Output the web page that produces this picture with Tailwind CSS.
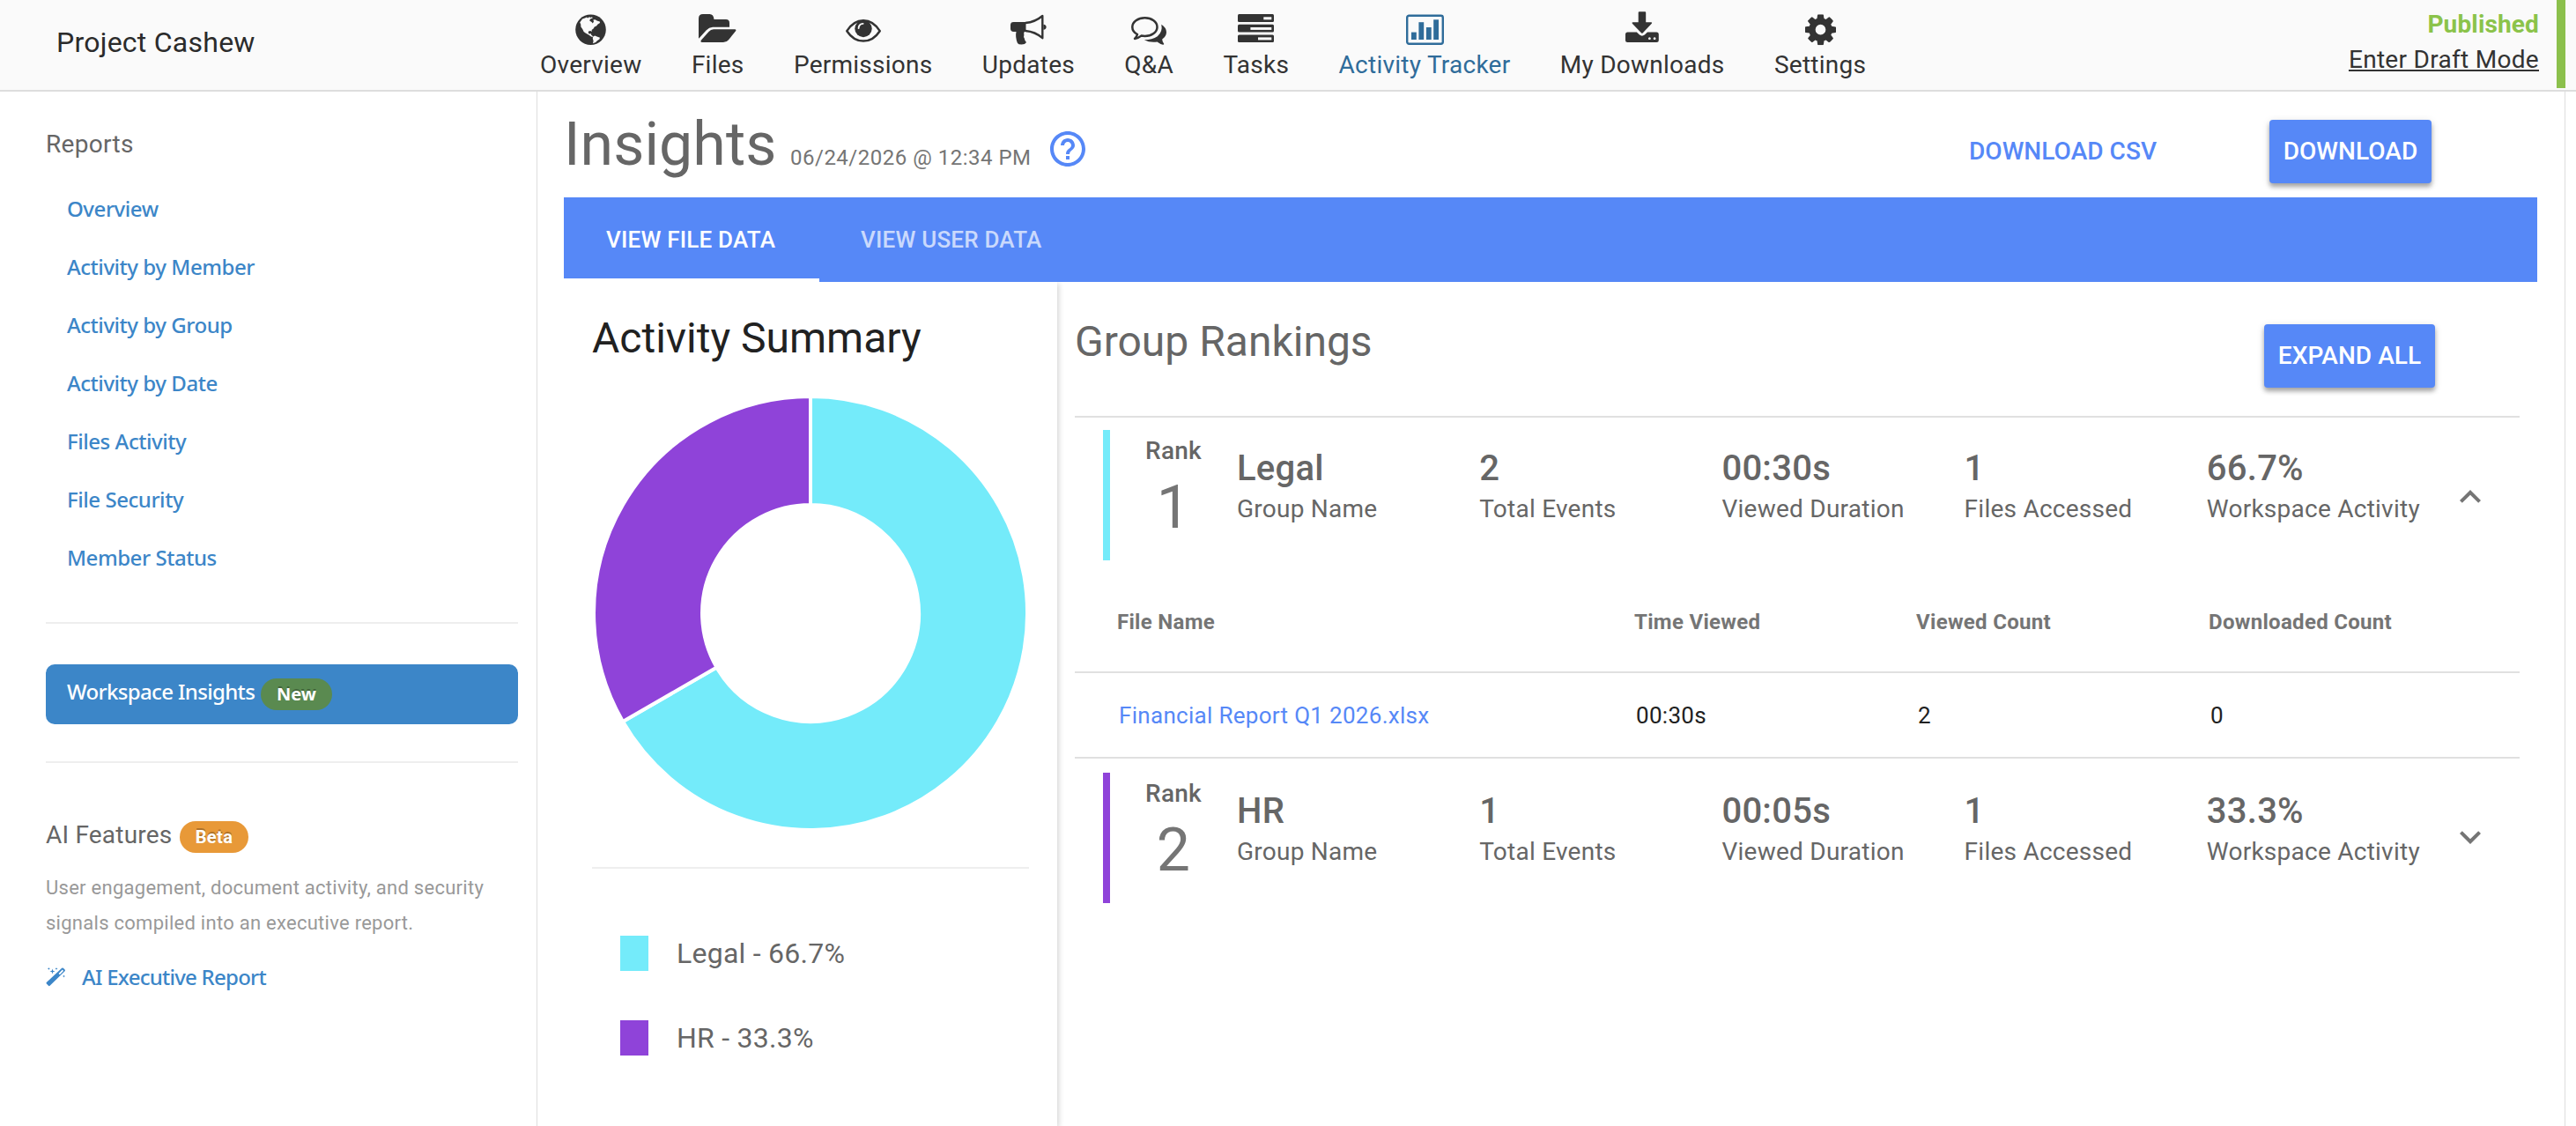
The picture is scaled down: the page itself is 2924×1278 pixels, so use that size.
<!DOCTYPE html>
<html lang="en">
<head>
  <meta charset="UTF-8"/>
  <meta name="viewport" content="width=device-width,initial-scale=1"/>
  <title>Project Cashew – Workspace Insights</title>
  <script src="https://cdn.jsdelivr.net/npm/@tailwindcss/browser@4"></script>
</head>
<body class="bg-white font-['Roboto',sans-serif] tracking-[0.25px] text-[#666] h-screen overflow-hidden flex flex-col">

  <!-- ─── TOP BAR ────────────────────────────────────────────────────────────── -->
  <header class="h-[104px] shrink-0 bg-[#fafafa] border-b-2 border-[#ddd] flex text-[28px] leading-[33px] text-[#333]">
    <div class="w-[613px] shrink-0 pl-16 pt-7 text-[32px] leading-10 text-[#2b2b2b]">Project Cashew</div>

    <nav class="flex gap-[56.4px] pt-3 whitespace-nowrap">
      <a class="flex flex-col items-center gap-[5px]">
        <svg class="h-10 w-[35px]" viewBox="0 0 35 40">
          <circle cx="17.5" cy="21.7" r="17.3" fill="#333"/>
          <g fill="#fafafa">
            <path d="M5.2 13.500L8 9.600L11 8.400L13 7.600L14 8.400L16 7.200L17.500 8L19 7.200L19.800 8.600L17 9.600L16.200 11.600L18.600 13L19.800 14.600L21 12.600L20.400 10.600L22.600 10.200L24.600 11.600L27.800 12.600L28 14L25.600 15.400L24 17.400L21.800 18.600L20.600 20.600L18.600 22L18.800 24L17.400 23L15 23.600L14.800 25.800L16.400 26.600L17.800 26L18 27.600L19.400 28.600L20 30.200L18 29.600L15.200 27.600L12 25.800L9.600 24L8.200 21L6.400 18.400L6.200 15.400Z"/>
            <path d="M20.200 29.600L22.200 28.400L24.600 29.400L28 30.800L27.400 32.600L24.800 34.200L23.200 36L20 37.200L20.600 34.400L19.800 31.800Z"/>
          </g>
        </svg>
        Overview
      </a>
      <a class="flex flex-col items-center gap-[5px]">
        <svg class="h-10 w-[43px]" viewBox="0 0 43 40" fill="#333">
          <g transform="translate(0 4)">
            <path d="M0 5Q0 0 5 0H12.500Q17 0 17.500 6H31Q35 6 35 10V14.700H16Q11.800 14.900 8.800 18.200L.4 27.500H0Z"/>
            <path d="M17 17.300H41Q43.200 17.500 42 19.200L34 29.200Q31.700 32 28 32H4Q1.500 31.800 3 29.600L11.500 19.900Q13.800 17.300 17 17.300Z"/>
          </g>
        </svg>
        Files
      </a>
      <a class="flex flex-col items-center gap-[5px]">
        <svg class="h-10 w-10" viewBox="0 0 40 40">
          <g transform="translate(0 10)">
            <path d="M1.300 13.200Q8.800 1.300 20 1.300T38.700 13.200Q31.200 24.600 20 24.600T1.300 13.200Z" fill="none" stroke="#333" stroke-width="2.500" stroke-linejoin="round"/>
            <circle cx="20" cy="10.500" r="9.700" fill="#333"/>
            <path d="M14.600 10Q14.800 5.200 19.600 4.900" fill="none" stroke="#fafafa" stroke-width="1.900" stroke-linecap="round"/>
          </g>
        </svg>
        Permissions
      </a>
      <a class="flex flex-col items-center gap-[5px]">
        <svg class="h-10 w-[41px]" viewBox="0 0 41 40" fill="#333">
          <g transform="translate(0 4.600)">
            <path d="M3.500 8.300H17.500V19.400H15.800Q14.600 21.500 15.400 23Q14.600 25 15.800 27Q16 29.500 18 31.500Q16.500 34 12.500 34Q9 34 8 32.500Q5.200 25.500 6.500 19.400H3.500Q0 19.400 0 16V11.700Q0 8.300 3.500 8.300Z"/>
            <path d="M17 9.400Q28 8.500 36.300 1.400V26.600Q28 19.300 17 18.400" fill="none" stroke="#333" stroke-width="2.400" stroke-linejoin="round"/>
            <path d="M37.400 11.200Q40.600 11.600 40.600 14.200T37.400 17.200Z"/>
          </g>
        </svg>
        Updates
      </a>
      <a class="flex flex-col items-center gap-[5px]">
        <svg class="h-10 w-10" viewBox="0 0 40 40" fill="#333">
          <g transform="translate(0 7)">
            <path d="M15.500 1.300C23.300 1.300 29.500 5.900 29.500 11.700S23.300 22 15.500 22Q13.500 22 11.400 21.600Q8 24.400 4 24.900Q6.300 22.900 7 20Q1.300 17 1.300 11.700C1.300 5.900 7.700 1.300 15.500 1.300Z" fill="none" stroke="#333" stroke-width="2.500" stroke-linejoin="round"/>
            <path d="M34.300 8.700Q40 12.400 40 17.500Q40 22 35.200 25.500Q35.200 28.500 37.300 31Q37 31.800 36 31.700Q32.800 31.200 29.500 28.600Q21 29.700 14.800 26.300Q24 26.300 29.800 22.200Q36 17 34.300 8.700Z"/>
          </g>
        </svg>
        Q&amp;A
      </a>
      <a class="flex flex-col items-center gap-[5px]">
        <svg class="h-10 w-[41px]" viewBox="0 0 41 40">
          <g fill="#333">
            <rect y="4" width="41" height="9" rx="1.500"/>
            <rect y="15.800" width="41" height="8.800" rx="1.500"/>
            <rect y="27.500" width="41" height="8.600" rx="1.500"/>
          </g>
          <g fill="#fafafa">
            <rect x="29.300" y="7.300" width="9" height="3"/>
            <rect x="14.400" y="19" width="23.900" height="2.900"/>
            <rect x="23" y="30.400" width="15.300" height="3"/>
          </g>
        </svg>
        Tasks
      </a>
      <a class="flex flex-col items-center gap-[5px] text-[#2f6c9a]">
        <svg class="h-10 w-[43px]" viewBox="0 0 43 40" fill="#2f6c9a">
          <rect x="1.200" y="5.800" width="40.600" height="32" rx="2.200" fill="none" stroke="#2f6c9a" stroke-width="2.400"/>
          <rect x="6" y="24.600" width="5.800" height="8.400"/>
          <rect x="14.400" y="13.200" width="5.800" height="19.800"/>
          <rect x="22.900" y="19" width="5.800" height="14"/>
          <rect x="31.200" y="10.300" width="5.800" height="22.700"/>
        </svg>
        Activity Tracker
      </a>
      <a class="flex flex-col items-center gap-[5px]">
        <svg class="h-10 w-[38px]" viewBox="0 0 38 40" fill="#333">
          <g transform="translate(0 1.300)">
            <path d="M15.700 0H22.200Q23.200 0 23.200 1V12H29.300Q30.800 12.200 29.800 13.400L19.600 24.200Q18.900 24.800 18.200 24.200L7.800 13.400Q6.900 12.200 8.400 12H14.700V1Q14.700 0 15.700 0Z"/>
            <path fill-rule="evenodd" d="M2.500 23.200H12.800L16 26.300Q18.900 28.600 21.800 26.300L25 23.200H35.300Q37.800 23.200 37.800 25.700V32.200Q37.800 34.700 35.300 34.700H2.500Q0 34.700 0 32.200V25.700Q0 23.200 2.500 23.200ZM27.400 29a1.400 1.400 0 1 0 .01 0ZM33.100 29a1.400 1.400 0 1 0 .01 0Z"/>
          </g>
        </svg>
        My Downloads
      </a>
      <a class="flex flex-col items-center gap-[5px]">
        <svg class="h-10 w-[35px]" viewBox="0 0 35 40" fill="#333">
          <svg y="4.200" width="35" height="35" viewBox="128 128 1536 1536">
            <path d="M1152 896q0-106-75-181t-181-75-181 75-75 181 75 181 181 75 181-75 75-181zm512-109v222q0 12-8 23t-20 13l-185 28q-19 54-39 91 35 50 107 138 10 12 10 25t-9 23q-27 37-99 108t-94 71q-12 0-26-9l-138-108q-44 23-91 38-16 136-29 186-7 28-36 28h-222q-14 0-24.500-8.500t-11.500-21.500l-28-184q-49-16-90-37l-141 107q-10 9-25 9-14 0-25-11-126-114-165-168-7-10-7-23 0-12 8-23 15-21 51-66.500t54-70.500q-27-50-41-99l-183-27q-13-2-21-12.500t-8-23.500v-222q0-12 8-23t19-13l186-28q14-46 39-92-40-57-107-138-10-12-10-24 0-10 9-23 26-36 98.500-107.500t94.500-71.500q13 0 26 10l138 107q44-23 91-38 16-136 29-186 7-28 36-28h222q14 0 24.500 8.500t11.500 21.500l28 184q49 16 90 37l142-107q9-9 24-9 13 0 25 10 129 119 165 170 7 8 7 22 0 12-8 23-15 21-51 66.500t-54 70.500q26 50 41 98l183 28q13 2 21 12.500t8 23.500z"/>
          </svg>
        </svg>
        Settings
      </a>
    </nav>

    <div class="ml-auto pt-[11px] pr-5 text-right tracking-[0.3px]">
      <div class="font-bold tracking-[0.15px] text-[#8bc34a]">Published</div>
      <a class="mt-[7px] block underline decoration-2 underline-offset-[2px]">Enter Draft Mode</a>
    </div>
    <div class="w-[10px] h-[100px] mr-3 bg-[#8bc04c]"></div>
  </header>

  <div class="flex flex-1 min-h-0">

    <!-- ─── SIDEBAR ──────────────────────────────────────────────────────────── -->
    <aside class="w-[610px] shrink-0 border-r border-[#ddd] pl-[52px] pr-[21px] pt-10">
      <h2 class="text-[28px] leading-10 tracking-[0.3px]">Reports</h2>
      <ul class="mt-5 pl-6 font-['Noto_Sans',sans-serif] font-medium text-[24px] leading-[66px] tracking-[-0.45px] text-[#3c86c8]">
        <li>Overview</li>
        <li>Activity by Member</li>
        <li>Activity by Group</li>
        <li>Activity by Date</li>
        <li>Files Activity</li>
        <li>File Security</li>
        <li>Member Status</li>
      </ul>

      <hr class="mt-10 border-t-2 border-[#eee]"/>
      <a class="mt-[46px] h-[68px] rounded-[10px] bg-[#3c86c8] pl-6 flex text-white font-['Noto_Sans',sans-serif]">
        <span class="w-[220px] text-[24px] leading-[62px] font-medium tracking-[-0.65px]">Workspace Insights</span>
        <span class="mt-4 w-[81px] h-9 rounded-full bg-[#5a8a50] text-center text-[20px] leading-9 font-bold tracking-normal [text-shadow:0_-2px_0_rgba(0,0,0,0.25)]">New</span>
      </a>
      <hr class="mt-[42px] border-t-2 border-[#eee]"/>

      <div class="mt-[62px] flex">
        <h2 class="w-[152px] text-[28px] leading-10 tracking-[0.2px]">AI Features</h2>
        <span class="mt-1 w-[78px] h-9 rounded-full bg-[#e89938] text-center text-[20px] leading-9 font-bold tracking-[0.4px] text-white [text-shadow:0_-2px_0_rgba(0,0,0,0.25)]">Beta</span>
      </div>
      <p class="mt-5 text-[22px] leading-10 tracking-[0.27px] text-[#999]">User engagement, document activity, and security<br/>signals compiled into an executive report.</p>
      <a class="mt-[21px] flex text-[#3c86c8]">
        <svg class="mt-[9px] w-[41px] h-[22px]" viewBox="0 0 41 22" fill="#3c86c8">
          <path fill-rule="evenodd" d="M18.200 .8Q19 .1 19.800 .8L21.600 2.600Q22.300 3.400 21.600 4.200L4.600 20.800Q3.800 21.500 3 20.800L.8 18.600Q.1 17.800 .8 17ZM18.900 2.600L14.600 6.900L15.900 8.200L20 4Z"/>
          <path d="M7.500 1.500L8.200 3.800L10.500 4.500L8.200 5.200L7.500 7.500L6.800 5.200L4.500 4.500L6.800 3.800ZM3.400 0L3.800 1.100L4.900 1.500L3.800 1.900L3.400 3L3 1.900L1.900 1.500L3 1.100ZM12 0L12.400 1.100L13.500 1.500L12.400 1.900L12 3L11.600 1.900L10.500 1.500L11.600 1.100ZM20.500 8.500L20.900 9.600L22 10L20.900 10.400L20.500 11.500L20.100 10.400L19 10L20.100 9.600Z"/>
        </svg>
        <span class="font-['Noto_Sans',sans-serif] font-medium text-[24px] leading-10 tracking-[-0.75px]">AI Executive Report</span>
      </a>
    </aside>

    <!-- ─── INSIGHTS ─────────────────────────────────────────────────────────── -->
    <main class="w-[2302px] border-r border-[#ddd] pl-[30px] flex flex-col">
      <div class="h-[120px] shrink-0 flex items-start">
        <h1 class="w-[257px] mt-5 text-[68px] leading-[80px] tracking-[0.1px]">Insights</h1>
        <span class="w-[291px] mt-[59px] text-[24px] leading-8 tracking-[0.5px] text-[#757575]">06/24/2026 @ 12:34 PM</span>
        <svg class="size-12 mt-[41px]" viewBox="0 0 24 24" fill="#5688f7">
          <path d="M11 18h2v-2h-2v2zm1-16C6.480 2 2 6.480 2 12s4.480 10 10 10 10-4.480 10-10S17.520 2 12 2zm0 18c-4.410 0-8-3.590-8-8s3.590-8 8-8 8 3.590 8 8-3.590 8-8 8zm0-14c-2.210 0-4 1.790-4 4h2c0-1.100.9-2 2-2s2 .9 2 2c0 2-3 1.750-3 5h2c0-2.250 3-2.500 3-5 0-2.210-1.790-4-4-4z"/>
        </svg>
        <div class="ml-auto mt-8 mr-[151px] flex font-medium text-[28px] leading-[72px] tracking-[0.05px]">
          <button class="w-[341px] text-left text-[#5688f7]">DOWNLOAD CSV</button>
          <button class="w-[184px] h-[72px] rounded-[4px] bg-[#5688f7] text-white shadow-[0_4px_5px_rgba(0,0,0,0.3),0_2px_10px_rgba(0,0,0,0.12)]">DOWNLOAD</button>
        </div>
      </div>

      <div class="w-[2240px] h-24 shrink-0 bg-[#5688f7] flex font-medium text-[26px] leading-[96px] tracking-[0.2px] text-white">
        <div class="w-[290px] h-24 pl-12 border-b-4 border-white">VIEW FILE DATA</div>
        <div class="pl-[47px] text-white/70">VIEW USER DATA</div>
      </div>

      <div class="flex flex-1 min-h-0 overflow-hidden">

        <!-- Activity summary -->
        <section class="w-[560px] shrink-0 px-8 shadow-[2px_2px_6px_rgba(0,0,0,0.16)]">
          <h2 class="pt-[35px] text-[48px] leading-[57px] tracking-normal text-[#212121]">Activity Summary</h2>
          <svg class="mt-9 w-[496px] h-[496px]" viewBox="-248 -248 496 496" stroke="#fff" stroke-width="4">
            <path fill="#74ebfa" d="M0 -246A246 246 0 1 1 -213 123L-106.500 61.500A123 123 0 1 0 0 -123Z"/>
            <path fill="#8f43d9" d="M-213 123A246 246 0 0 1 0 -246V-123A123 123 0 0 0 -106.500 61.500Z"/>
          </svg>
          <hr class="mt-10 border-t-2 border-[#eee]"/>
          <ul class="mt-[76px] pl-8 flex flex-col gap-14 text-[32px] leading-10">
            <li class="flex gap-8"><span class="w-8 h-10 bg-[#74ebfa]"></span>Legal - 66.7%</li>
            <li class="flex gap-8"><span class="w-8 h-10 bg-[#8f43d9]"></span>HR - 33.3%</li>
          </ul>
        </section>

        <!-- Group rankings -->
        <section class="flex-1 pl-5 pr-[51px]">
          <div class="h-[154px] border-b-2 border-[#e0e0e0] flex justify-between">
            <h2 class="pt-[39px] text-[48px] leading-[57px] tracking-normal">Group Rankings</h2>
            <button class="w-[194px] h-[72px] mt-12 mr-24 rounded-[4px] bg-[#5688f7] text-white font-medium text-[28px] leading-[72px] tracking-[0.05px] shadow-[0_4px_5px_rgba(0,0,0,0.3),0_2px_10px_rgba(0,0,0,0.12)]">EXPAND ALL</button>
          </div>

          <div class="mt-[14px] ml-8 h-[148px] border-l-8 border-[#74ebfa] flex text-[28px] leading-[33px]">
            <div class="ml-8 w-20 pt-[7px] text-center">
              <div class="font-medium">Rank</div>
              <div class="mt-2 text-[68px] leading-[80px] text-[#757575]">1</div>
            </div>
            <div class="ml-8 w-[1376px] pt-5 grid grid-cols-5">
              <div><div class="mb-[5px] text-[40px] leading-12 font-medium">Legal</div>Group Name</div>
              <div><div class="mb-[5px] text-[40px] leading-12 font-medium">2</div>Total Events</div>
              <div><div class="mb-[5px] text-[40px] leading-12 font-medium">00:30s</div>Viewed Duration</div>
              <div><div class="mb-[5px] text-[40px] leading-12 font-medium">1</div>Files Accessed</div>
              <div><div class="mb-[5px] text-[40px] leading-12 font-medium">66.7%</div>Workspace Activity</div>
            </div>
            <svg class="size-12 mt-[52px]" viewBox="0 0 24 24" fill="#757575"><path d="M12 8l-6 6 1.410 1.410L12 10.830l4.590 4.580L18 14z"/></svg>
          </div>

          <div class="mt-[54px] pl-12 pb-10 border-b-2 border-[#e0e0e0] grid grid-cols-[587px_320px_332px_1fr] text-[24px] leading-8 font-bold tracking-[0.3px] text-[#757575]">
            <div>File Name</div>
            <div>Time Viewed</div>
            <div>Viewed Count</div>
            <div>Downloaded Count</div>
          </div>
          <div class="pt-8 pl-[50px] pb-[31px] border-b-2 border-[#e0e0e0] grid grid-cols-[587px_320px_332px_1fr] text-[26px] leading-8 tracking-[0.3px] text-[#212121]">
            <a class="text-[#5688f7]">Financial Report Q1 2026.xlsx</a>
            <div>00:30s</div>
            <div>2</div>
            <div>0</div>
          </div>

          <div class="mt-4 ml-8 h-[148px] border-l-8 border-[#8f43d9] flex text-[28px] leading-[33px]">
            <div class="ml-8 w-20 pt-[7px] text-center">
              <div class="font-medium">Rank</div>
              <div class="mt-2 text-[68px] leading-[80px] text-[#757575]">2</div>
            </div>
            <div class="ml-8 w-[1376px] pt-5 grid grid-cols-5">
              <div><div class="mb-[5px] text-[40px] leading-12 font-medium">HR</div>Group Name</div>
              <div><div class="mb-[5px] text-[40px] leading-12 font-medium">1</div>Total Events</div>
              <div><div class="mb-[5px] text-[40px] leading-12 font-medium">00:05s</div>Viewed Duration</div>
              <div><div class="mb-[5px] text-[40px] leading-12 font-medium">1</div>Files Accessed</div>
              <div><div class="mb-[5px] text-[40px] leading-12 font-medium">33.3%</div>Workspace Activity</div>
            </div>
            <svg class="size-12 mt-[49px]" viewBox="0 0 24 24" fill="#757575"><path d="M16.590 8.590L12 13.170 7.410 8.590 6 10l6 6 6-6z"/></svg>
          </div>
        </section>
      </div>
    </main>
  </div>
</body>
</html>
